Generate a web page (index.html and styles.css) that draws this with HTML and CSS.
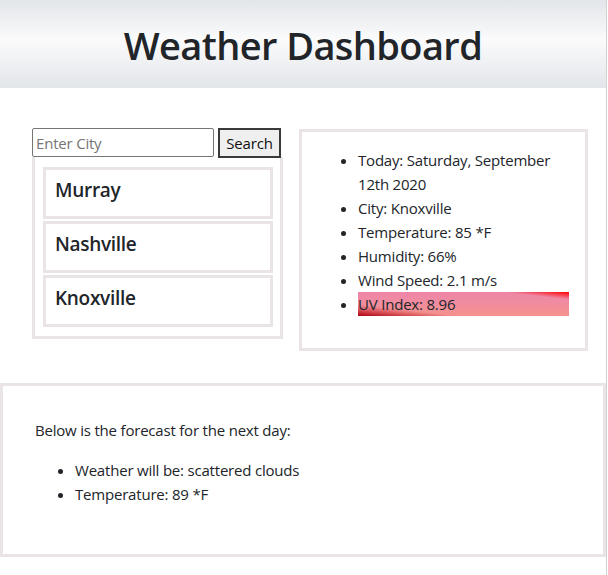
FILE: index.html
```html
<!DOCTYPE html>
<html lang="en">
<head>
<meta charset="utf-8">
<title>Weather Dashboard</title>
<link rel="stylesheet" href="styles.css">
</head>
<body>
<div class="page">
  <header class="jumbo">
    <h1 class="title">Weather Dashboard</h1>
  </header>
  <main class="top-row">
    <section class="search-col">
      <form class="search-form">
        <input class="city-input" type="text" placeholder="Enter City">
        <button class="search-btn" type="button">Search</button>
      </form>
      <div class="history">
        <div class="city-card"><h5 class="city-name">Murray</h5></div>
        <div class="city-card"><h5 class="city-name">Nashville</h5></div>
        <div class="city-card"><h5 class="city-name">Knoxville</h5></div>
      </div>
    </section>
    <section class="today">
      <ul class="today-list">
        <li>Today: Saturday, September 12th 2020</li>
        <li>City: Knoxville</li>
        <li>Temperature: 85 *F</li>
        <li>Humidity: 66%</li>
        <li>Wind Speed: 2.1 m/s</li>
        <li class="uv">UV Index: 8.96</li>
      </ul>
    </section>
  </main>
  <section class="forecast">
    <p class="forecast-intro">Below is the forecast for the next day:</p>
    <ul class="forecast-list">
      <li>Weather will be: scattered clouds</li>
      <li>Temperature: 89 *F</li>
    </ul>
  </section>
</div>
</body>
</html>
```
FILE: styles.css
```css
html, body {
  margin: 0;
  padding: 0;
  background: #fff;
}
body {
  font-family: "Open Sans", "Noto Sans", sans-serif;
  font-size: 15px;
  letter-spacing: -0.2px;
  line-height: 24px;
  color: #212529;
}
.page {
  width: 607px;
  min-height: 575px;
  border-right: 1px solid #d2d2d2;
  box-sizing: border-box;
}
.jumbo {
  height: 88px;
  background: linear-gradient(#e2e5e9 0%, #fbfbfc 45%, #e2e5e9 100%);
  display: flex;
  align-items: center;
  justify-content: center;
}
.title {
  margin: 2px 0 0;
  font-size: 38px;
  font-weight: 600;
  letter-spacing: -0.6px;
  line-height: 48px;
  color: #212529;
}
.top-row {
  display: flex;
  align-items: flex-start;
  padding: 40px 0 0 32px;
  gap: 16px;
}
.search-col {
  width: 251px;
}
.search-form {
  display: flex;
  gap: 4px;
  height: 29px;
}
.city-input {
  width: 182px;
  box-sizing: border-box;
  height: 29px;
  margin: 0;
  border: 1px solid #767676;
  border-radius: 2px;
  padding: 1px 3px;
  font-family: inherit;
  font-size: 15px;
  letter-spacing: -0.2px;
  color: #212529;
}
.city-input::placeholder {
  color: #757575;
}
.search-btn {
  width: 63px;
  height: 30px;
  box-sizing: border-box;
  margin: 0;
  border: 2px solid #3a3a3a;
  background: #efefef;
  font-family: inherit;
  font-size: 15px;
  letter-spacing: -0.2px;
  padding: 0 4px;
  color: #111;
}
.history {
  border: 3px solid #ebe4e6;
  border-top: none;
  padding: 10px 7px 9px 8px;
  display: flex;
  flex-direction: column;
  gap: 2px;
}
.city-card {
  border: 3px solid #ebe4e6;
  padding: 8px 9px 6px;
}
.city-name {
  margin: 0 0 8px;
  font-size: 19px;
  font-weight: 600;
  letter-spacing: -0.3px;
  line-height: 24px;
}
.today {
  width: 289px;
  box-sizing: border-box;
  margin-top: 1px;
  border: 3px solid #ebe4e6;
  padding: 16px;
}
.today-list {
  margin: 0 0 16px;
  padding-left: 40px;
}
.uv {
  background:
    linear-gradient(to top right, #b00012 0%, rgba(176,0,18,0) 24%),
    linear-gradient(to bottom left, #ff0000 0%, rgba(255,0,0,0) 16%),
    linear-gradient(#ee86a8 0%, #f08ca0 45%, #f5928a 100%);
}
.forecast {
  margin-top: 32px;
  border: 3px solid #ebe4e6;
  padding: 32px;
  width: 606px;
  box-sizing: border-box;
}
.forecast-intro {
  margin: 0 0 16px;
}
.forecast-list {
  margin: 0 0 16px;
  padding-left: 40px;
}
```
